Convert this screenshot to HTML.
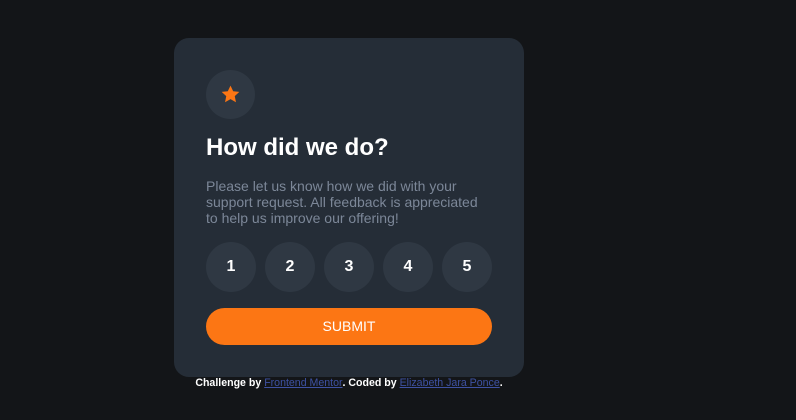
<!DOCTYPE html>
<html><head><style>
body{margin:0;width:796px;height:420px;background:#131518;font-family:"Liberation Sans",Arial,sans-serif;position:relative;overflow:hidden}
.card{position:absolute;left:174px;top:38px;width:350px;height:339px;background:#252d37;border-radius:15px}
.star{position:absolute;left:32px;top:32px;width:49px;height:49px;border-radius:50%;background:#2f3843}
.star svg{position:absolute;left:15px;top:15px}
h1{position:absolute;left:32px;top:96px;margin:0;font-size:24px;color:#fff;font-weight:bold}
p{position:absolute;left:32px;top:140px;margin:0;width:280px;font-size:14px;line-height:16px;color:#7c8798}
.n{position:absolute;top:204px;width:50px;height:50px;border-radius:50%;background:#2f3843;color:#fff;font-weight:bold;font-size:16px;text-align:center;line-height:50px}
.sub{position:absolute;left:32px;top:270px;width:286px;height:37px;border-radius:19px;background:#fc7614;color:#fff;font-size:14px;text-align:center;line-height:37px}
.foot{position:absolute;top:377px;left:0;width:698px;text-align:center;font-size:10.6px;font-weight:bold;color:#fff}
.foot a{color:#3e52a3;text-decoration:underline;font-weight:normal}
</style></head><body>
<div class="card">
<div class="star"><svg width="19" height="18" viewBox="0 0 17 16"><path d="M8.5 0.5l2.4 5 5.5.6-4.1 3.8 1.1 5.5-4.9-2.8-4.9 2.8 1.1-5.5L0.6 6.1l5.5-.6z" fill="#fc7614"/></svg></div>
<h1>How did we do?</h1>
<p>Please let us know how we did with your support request. All feedback is appreciated to help us improve our offering!</p>
<div class="n" style="left:32px">1</div>
<div class="n" style="left:91px">2</div>
<div class="n" style="left:150px">3</div>
<div class="n" style="left:209px">4</div>
<div class="n" style="left:268px">5</div>
<div class="sub">SUBMIT</div>
</div>
<div class="foot">Challenge by <a>Frontend Mentor</a>. Coded by <a>Elizabeth Jara Ponce</a>.</div>
</body></html>
